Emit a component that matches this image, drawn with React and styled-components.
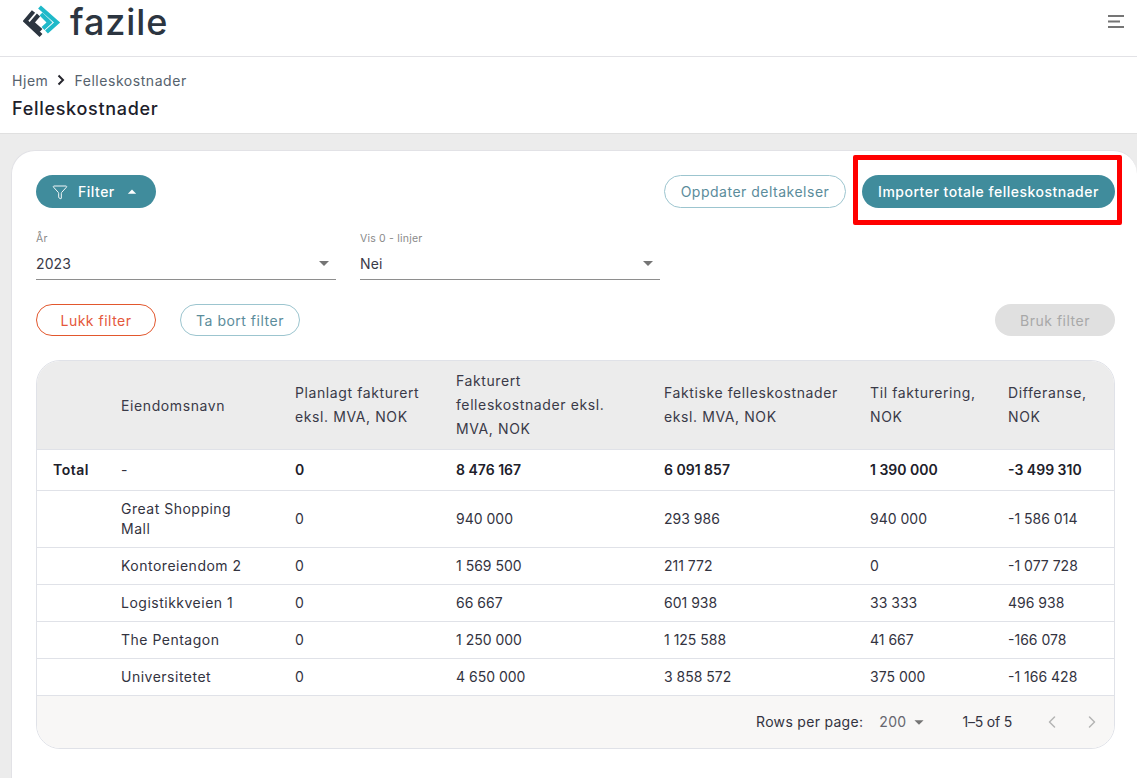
import React from 'react';
import styled, { createGlobalStyle } from 'styled-components';
import { Filter, ChevronLeft, ChevronRight } from 'lucide-react';

const GlobalStyle = createGlobalStyle`
  html, body {
    margin: 0;
    padding: 0;
    background: #fff;
    font-family: Inter, "Open Sans", Arial, sans-serif;
    color: #2b2b3a;
  }
  * {
    box-sizing: border-box;
  }
`;

const Page = styled.div`
  position: relative;
  width: 1137px;
  height: 778px;
  overflow: hidden;
  display: flex;
  flex-direction: column;
  background: #ececec;
`;
const Header = styled.header`
  flex: none;
  height: 57px;
  display: flex;
  justify-content: space-between;
  padding: 5px 13px 0 23px;
  background: #fff;
  border-bottom: 1px solid #e2e2e6;
`;
const Logo = styled.div`
  display: flex;
  align-items: flex-start;
  gap: 9px;
`;
const LogoText = styled.span`
  font-size: 36px;
  line-height: 35px;
  font-weight: 500;
  letter-spacing: 0.9px;
  color: #2c3540;
`;
const MenuButton = styled.svg`
  width: 16px;
  height: 13px;
  margin-top: 10px;
`;
const TitleBar = styled.div`
  flex: none;
  height: 77px;
  padding: 14px 12px 0;
  background: #fff;
  border-bottom: 1px solid #e0e0e0;
`;
const Crumbs = styled.div`
  display: flex;
  align-items: center;
  gap: 9px;
  height: 18px;
  font-size: 14px;
  letter-spacing: 0.55px;
  color: #56626d;
`;
const Title = styled.h1`
  margin: 9px 0 0;
  font-size: 18px;
  line-height: 22px;
  font-weight: 500;
  letter-spacing: 0.7px;
  color: #20202a;
`;
const Card = styled.main`
  flex: 1;
  margin: 16px 0 0 11px;
  padding: 24px 22px 0 24px;
  background: #fff;
  border: 1px solid #e2e2e6;
  border-right: none;
  border-bottom: none;
  border-radius: 24px 24px 0 0;
`;
const Row = styled.div`
  display: flex;
  align-items: center;
  justify-content: space-between;
`;
const ButtonGroup = styled.div`
  display: flex;
  gap: ${p => p.$gap}px;
`;
const Button = styled.button`
  display: flex;
  align-items: center;
  justify-content: center;
  gap: 10px;
  height: ${p => p.$height || 32}px;
  width: ${p => p.$width}px;
  padding: 0;
  border-radius: 17px;
  font-family: inherit;
  font-size: 14px;
  font-weight: ${p => (p.$variant === 'solid' ? 500 : 400)};
  letter-spacing: 0.5px;
  border: 1px solid transparent;
  ${p => p.$variant === 'solid' && 'background: #408c9c; color: #fff;'}
  ${p => p.$variant === 'outline' && 'background: #fff; color: #5b8c9b; border-color: #9cc5cf;'}
  ${p => p.$variant === 'danger' && 'background: #fff; color: #e4573b; border-color: #e2572d;'}
  ${p => p.$variant === 'disabled' && 'background: #e0e0e0; color: #a8a8a8;'}
`;
const FilterButton = styled(Button)`
  justify-content: flex-start;
  padding-left: 15px;
`;
const FilterCaret = styled.span`
  display: flex;
  margin-left: -3px;
`;
const Fields = styled.div`
  display: flex;
  gap: 24px;
  margin-top: 24px;
`;
const Field = styled.div`
  position: relative;
  width: 300px;
  height: 48px;
  border-bottom: 1px solid #8e8e8e;
`;
const FieldLabel = styled.div`
  font-size: 10.5px;
  line-height: 13px;
  letter-spacing: 0.2px;
  color: #8a8a8a;
`;
const FieldValue = styled.div`
  margin-top: 10px;
  font-size: 14px;
  line-height: 18px;
  letter-spacing: 0.1px;
  color: #3a3a48;
`;
const Caret = styled.svg`
  width: ${p => p.$size || 24}px;
  height: ${p => p.$size || 24}px;
  fill: ${p => p.$color || '#757575'};
  transform: ${p => (p.$up ? 'rotate(180deg)' : 'none')};
  flex: none;
`;
const FieldCaret = styled.div`
  position: absolute;
  right: 0;
  top: 19px;
  line-height: 0;
`;
const FilterActions = styled(Row)`
  margin-top: 24px;
`;
const TableBox = styled.div`
  margin-top: 24px;
  width: 1079px;
  height: 389px;
  border: 1px solid #e0e2e8;
  border-radius: 24px;
  overflow: hidden;
  background: #fff;
`;
const Table = styled.table`
  width: 1078px;
  table-layout: fixed;
  border-collapse: collapse;
  font-size: 14px;
`;
const HeadCell = styled.th`
  height: 88px;
  padding: 0 16px;
  text-align: left;
  font-weight: 400;
  line-height: 24px;
  letter-spacing: 0.6px;
  color: #3a3a48;
  background: #ececec;
  border-bottom: 1px solid #e0e2e8;
  &:nth-child(2) {
    padding-top: 3px;
  }
`;
const HeadText = styled.span`
  display: block;
  max-width: ${p => p.$maxWidth}px;
`;
const Cell = styled.td`
  height: ${p => p.$height || 37}px;
  padding: 0 16px;
  line-height: 20px;
  letter-spacing: ${p => (p.$text ? 0.5 : 0)}px;
  font-weight: ${p => (p.$bold ? 600 : 400)};
  color: ${p => (p.$bold ? '#20202a' : '#33333f')};
  border-bottom: 1px solid #e0e2e8;
`;
const NameText = styled.span`
  display: block;
  max-width: 125px;
`;
const Footer = styled.div`
  height: 53px;
  display: flex;
  align-items: center;
  justify-content: flex-end;
  padding: 0 12px 1px 0;
  background: #f8f7f6;
  font-size: 14px;
  letter-spacing: 0.3px;
  color: #33333f;
`;
const PageSize = styled.div`
  display: flex;
  align-items: center;
  gap: 2px;
  margin-left: 16px;
  color: #66666f;
`;
const PageCount = styled.span`
  margin-left: 32px;
  letter-spacing: -0.2px;
`;
const Pager = styled.div`
  display: flex;
  gap: 20px;
  margin-left: 30px;
  color: #b4b4b4;
`;
const Annotation = styled.div`
  position: absolute;
  left: 853px;
  top: 155px;
  width: 269px;
  height: 70px;
  border: 5px solid #ff0000;
  border-radius: 2px;
  pointer-events: none;
`;

const columns = [
  ['', 68, 36],
  ['Eiendomsnavn', 174, 142],
  ['Planlagt fakturert eksl. MVA, NOK', 161, 129],
  ['Fakturert felleskostnader eksl. MVA, NOK', 208, 160],
  ['Faktiske felleskostnader eksl. MVA, NOK', 206, 174],
  ['Til fakturering, NOK', 138, 106],
  ['Differanse, NOK', 123, 91],
];

const rows = [
  ['Great Shopping Mall', '0', '940 000', '293 986', '940 000', '-1 586 014'],
  ['Kontoreiendom 2', '0', '1 569 500', '211 772', '0', '-1 077 728'],
  ['Logistikkveien 1', '0', '66 667', '601 938', '33 333', '496 938'],
  ['The Pentagon', '0', '1 250 000', '1 125 588', '41 667', '-166 078'],
  ['Universitetet', '0', '4 650 000', '3 858 572', '375 000', '-1 166 428'],
];

const total = ['Total', '-', '0', '8 476 167', '6 091 857', '1 390 000', '-3 499 310'];

const CaretIcon = props => (
  <Caret viewBox="0 0 24 24" {...props}>
    <path d="M7 10l5 5 5-5z" />
  </Caret>
);

const LogoMark = () => (
  <svg width="38" height="33" viewBox="23 5 38 33" fill="none" strokeWidth="4.2">
    <path d="M33.5 11.5 L25.5 21 L41 35.5" stroke="#2c3540" />
    <path d="M38.5 15 L32 22.5 L41 30.5" stroke="#2c3540" />
    <path d="M39.5 7 L57 22.5 L46.5 32" stroke="#1fb9c9" />
    <path d="M41 14 L49.5 22.5 L43 28.5" stroke="#1fb9c9" />
  </svg>
);

export default function App() {
  return (
    <Page>
      <GlobalStyle />
      <Header>
        <Logo>
          <LogoMark />
          <LogoText>fazile</LogoText>
        </Logo>
        <MenuButton viewBox="0 0 16 13" stroke="#757575" strokeWidth="2">
          <path d="M0 1h16M0 6.5h12M0 12h16" />
        </MenuButton>
      </Header>
      <TitleBar>
        <Crumbs>
          <span>Hjem</span>
          <svg width="8" height="12" viewBox="0 0 8 12" fill="none" stroke="#26262e" strokeWidth="2">
            <path d="M1.5 1.5 L6 6 L1.5 10.5" />
          </svg>
          <span>Felleskostnader</span>
        </Crumbs>
        <Title>Felleskostnader</Title>
      </TitleBar>
      <Card>
        <Row>
          <FilterButton $variant="solid" $width={120} $height={33}>
            <Filter size={16} strokeWidth={1.4} />
            Filter
            <FilterCaret><CaretIcon $up $size={20} $color="#fff" /></FilterCaret>
          </FilterButton>
          <ButtonGroup $gap={16}>
            <Button $variant="outline" $width={182} $height={33}>Oppdater deltakelser</Button>
            <Button $variant="solid" $width={253} $height={33}>Importer totale felleskostnader</Button>
          </ButtonGroup>
        </Row>
        <Fields>
          <Field>
            <FieldLabel>År</FieldLabel>
            <FieldValue>2023</FieldValue>
            <FieldCaret><CaretIcon /></FieldCaret>
          </Field>
          <Field>
            <FieldLabel>Vis 0 - linjer</FieldLabel>
            <FieldValue>Nei</FieldValue>
            <FieldCaret><CaretIcon /></FieldCaret>
          </Field>
        </Fields>
        <FilterActions>
          <ButtonGroup $gap={24}>
            <Button $variant="danger" $width={120}>Lukk filter</Button>
            <Button $variant="outline" $width={120}>Ta bort filter</Button>
          </ButtonGroup>
          <Button $variant="disabled" $width={120}>Bruk filter</Button>
        </FilterActions>
        <TableBox>
          <Table>
            <colgroup>
              {columns.map(([, width], i) => <col key={i} width={width} />)}
            </colgroup>
            <thead>
              <tr>
                {columns.map(([label, , maxWidth], i) => (
                  <HeadCell key={i}><HeadText $maxWidth={maxWidth}>{label}</HeadText></HeadCell>
                ))}
              </tr>
            </thead>
            <tbody>
              <tr>
                {total.map((value, i) => (
                  <Cell key={i} $bold={i !== 1} $text={i === 0} $height={41}>{value}</Cell>
                ))}
              </tr>
              {rows.map((row, r) => (
                <tr key={r}>
                  <Cell $height={r === 0 ? 57 : 37} />
                  {row.map((value, i) => (
                    <Cell key={i} $text={i === 0}>{i === 0 ? <NameText>{value}</NameText> : value}</Cell>
                  ))}
                </tr>
              ))}
            </tbody>
          </Table>
          <Footer>
            <span>Rows per page:</span>
            <PageSize>
              200
              <CaretIcon $size={22} />
            </PageSize>
            <PageCount>1–5 of 5</PageCount>
            <Pager>
              <ChevronLeft size={20} strokeWidth={1.8} />
              <ChevronRight size={20} strokeWidth={1.8} />
            </Pager>
          </Footer>
        </TableBox>
      </Card>
      <Annotation />
    </Page>
  );
}
